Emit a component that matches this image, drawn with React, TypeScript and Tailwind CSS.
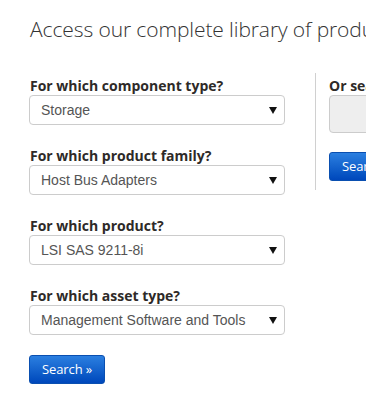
const fields = [
  { label: 'For which component type?', value: 'Storage' },
  { label: 'For which product family?', value: 'Host Bus Adapters' },
  { label: 'For which product?', value: 'LSI SAS 9211-8i' },
  { label: 'For which asset type?', value: 'Management Software and Tools' },
];

function SelectBox({ value }: { value: string }) {
  return (
    <div className="flex h-[30px] w-[256px] items-center justify-between rounded-[4px] border border-[#ccc] bg-white pl-[11px] pr-[7px] font-['Liberation_Sans',Arial,sans-serif] text-[14px] text-[#555]">
      <span>{value}</span>
      <svg width="8" height="7" viewBox="0 0 8 7" className="mt-[1px]">
        <path d="M0 0 H8 L4 7 Z" fill="#111" />
      </svg>
    </div>
  );
}

function SearchButton({ label }: { label: string }) {
  return (
    <button className="h-[29px] whitespace-nowrap rounded-[3px] border border-[#0a4fb0] bg-gradient-to-b from-[#2b7fe0] to-[#0047bb] px-[12px] text-left font-['Open_Sans',sans-serif] text-[13px] tracking-[-0.1px] text-white">
      {label}
    </button>
  );
}

export default function App() {
  return (
    <div className="h-[403px] w-[366px] overflow-hidden bg-white">
      <div className="w-[600px] pl-[30px] pt-[14px]">
        <h1 className="whitespace-nowrap font-['Open_Sans',sans-serif] text-[21px] font-light leading-[30px] tracking-[-0.1px] text-[#333]">
          Access our complete library of product documentation
        </h1>

        <div className="mt-[32px] flex">
          <div className="flex w-[256px] flex-col">
            {fields.map((f) => (
              <div key={f.label} className="mb-[21px] -ml-[1px]">
                <div className="pl-[1px] font-['Open_Sans',sans-serif] text-[14px] font-bold leading-[19px] text-[#2e2a28]">
                  {f.label}
                </div>
                <SelectBox value={f.value} />
              </div>
            ))}
            <div className="-ml-[1px] -mt-[1px]">
              <SearchButton label="Search »" />
            </div>
          </div>

          <div className="ml-[29px] mr-[13px] mt-[-3px] h-[117px] w-px bg-[#d0d0d0]" />

          <div className="flex flex-col">
            <div className="whitespace-nowrap font-['Open_Sans',sans-serif] text-[14px] font-bold leading-[19px] text-[#2e2a28]">
              Or search by keyword
            </div>
            <div className="h-[38px] w-[250px] rounded-[4px] border border-[#ccc] bg-[#eee]" />
            <div className="mt-[19px]">
              <SearchButton label="Search »" />
            </div>
          </div>
        </div>
      </div>
    </div>
  );
}
